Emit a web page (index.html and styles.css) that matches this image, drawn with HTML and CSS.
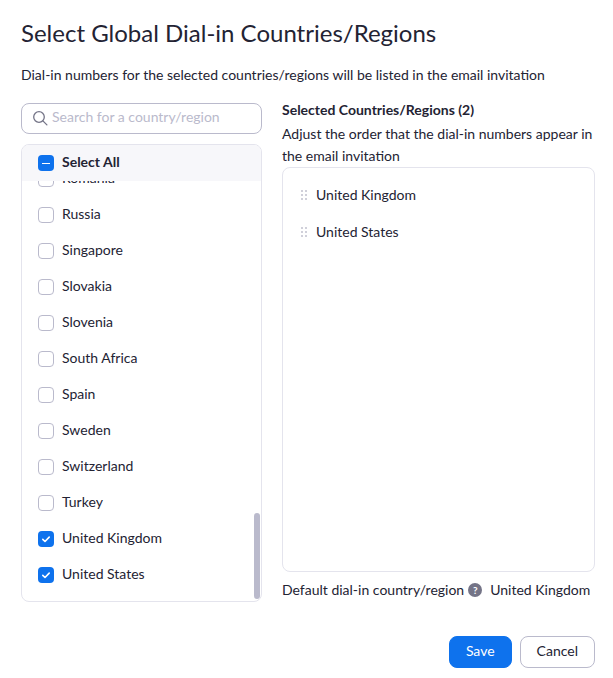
FILE: index.html
```html
<!DOCTYPE html>
<html lang="en">

<head>
    <meta charset="UTF-8">
    <meta name="viewport" content="width=device-width, initial-scale=1.0">
    <title>Select Global Dial-in Countries/Regions</title>
    <link rel="stylesheet" href="styles.css">
</head>

<body>
    <svg class="defs" width="0" height="0">
        <symbol id="tick" viewBox="0 0 16 16">
            <path d="M4.8 8.4l2.2 2.1 4.2-4.4" fill="none" stroke="#fff" stroke-width="1.6" stroke-linecap="round" stroke-linejoin="round" />
        </symbol>
        <symbol id="grip" viewBox="0 0 6 10">
            <g fill="#d0d0da">
                <rect x="0" y="0" width="2" height="2" /><rect x="4" y="0" width="2" height="2" />
                <rect x="0" y="4" width="2" height="2" /><rect x="4" y="4" width="2" height="2" />
                <rect x="0" y="8" width="2" height="2" /><rect x="4" y="8" width="2" height="2" />
            </g>
        </symbol>
    </svg>

    <div class="dialog">
        <h1>Select Global Dial-in Countries/Regions</h1>
        <p class="intro">Dial-in numbers for the selected countries/regions will be listed in the email invitation</p>

        <div class="columns">
            <!-- Left: country picker -->
            <div class="picker">
                <div class="search">
                    <svg class="search-icon" width="16" height="16" viewBox="0 0 16 16">
                        <circle cx="7" cy="7" r="5.3" fill="none" stroke="#747487" stroke-width="1.3" />
                        <path d="M10.9 10.9l4 4" fill="none" stroke="#747487" stroke-width="1.3" stroke-linecap="round" />
                    </svg>
                    <span class="placeholder">Search for a country/region</span>
                </div>

                <div class="country-box">
                    <div class="select-all">
                        <span class="check on"><span class="dash"></span></span>
                        <span>Select All</span>
                    </div>
                    <ul class="countries">
                        <li><span class="check"></span>Romania</li>
                        <li><span class="check"></span>Russia</li>
                        <li><span class="check"></span>Singapore</li>
                        <li><span class="check"></span>Slovakia</li>
                        <li><span class="check"></span>Slovenia</li>
                        <li><span class="check"></span>South Africa</li>
                        <li><span class="check"></span>Spain</li>
                        <li><span class="check"></span>Sweden</li>
                        <li><span class="check"></span>Switzerland</li>
                        <li><span class="check"></span>Turkey</li>
                        <li><span class="check on"><svg width="16" height="16"><use href="#tick" /></svg></span>United Kingdom</li>
                        <li><span class="check on"><svg width="16" height="16"><use href="#tick" /></svg></span>United States</li>
                    </ul>
                    <div class="scrollbar"></div>
                </div>
            </div>

            <!-- Right: selected list -->
            <div class="selected">
                <h3>Selected Countries/Regions (2)</h3>
                <p class="hint">Adjust the order that the dial-in numbers appear in the email invitation</p>
                <ul class="selected-box">
                    <li><svg class="grip" width="6" height="10"><use href="#grip" /></svg>United Kingdom</li>
                    <li><svg class="grip" width="6" height="10"><use href="#grip" /></svg>United States</li>
                </ul>
                <div class="default-row">
                    <span>Default dial-in country/region</span>
                    <span class="help">?</span>
                    <span class="default-value">United Kingdom</span>
                </div>
            </div>
        </div>

        <div class="actions">
            <button class="btn primary">Save</button>
            <button class="btn">Cancel</button>
        </div>
    </div>
</body>

</html>
```

FILE: styles.css
```css
* {
    box-sizing: border-box;
}

html, body {
    height: 100%;
}

body {
    margin: 0;
    font-family: Lato, "Open Sans", sans-serif;
    font-size: 14px;
    color: #232333;
    background: #fff;
    overflow: hidden;
}

.defs {
    position: absolute;
}

.dialog {
    padding: 17px 18px 0 21px;
}

h1 {
    margin: 0;
    font-size: 24px;
    font-weight: 400;
    line-height: 32px;
}

.intro {
    margin: 16px 0 0;
    line-height: 20px;
}

.columns {
    display: flex;
    gap: 20px;
    margin-top: 18px;
}

.picker {
    width: 241px;
    flex: none;
}

.search {
    height: 31px;
    display: flex;
    align-items: center;
    gap: 4px;
    padding: 0 0 2px 10px;
    border: 1px solid #babacc;
    border-radius: 8px;
}

.placeholder {
    margin-bottom: 2px;
    color: #babacc;
}

.country-box {
    position: relative;
    height: 458px;
    margin-top: 10px;
    border: 1px solid #e4e4ed;
    border-radius: 8px;
    overflow: hidden;
}

.select-all {
    position: relative;
    z-index: 1;
    height: 36px;
    display: flex;
    align-items: center;
    gap: 8px;
    padding-left: 16px;
    padding-bottom: 4px;
    font-weight: 700;
    background: #f7f7fa;
}

.countries {
    list-style: none;
    margin: -22px 0 0;
    padding: 0;
}

.countries li {
    height: 36px;
    display: flex;
    align-items: center;
    gap: 8px;
    padding-left: 16px;
}

.check {
    width: 16px;
    height: 16px;
    margin-top: 4px;
    display: flex;
    align-items: center;
    justify-content: center;
    flex: none;
    border: 1px solid #babacc;
    border-radius: 4px;
    background: #fff;
}

.check.on {
    border: none;
    background: #0e72ed;
}

.dash {
    width: 8px;
    height: 1px;
    background: #fff;
}

.scrollbar {
    position: absolute;
    top: 368px;
    left: 232px;
    width: 6px;
    height: 86px;
    border-radius: 3px;
    background: #babacc;
}

.selected {
    width: 313px;
    flex: none;
}

h3 {
    margin: -3px 0 0;
    font-size: 14px;
    font-weight: 700;
    line-height: 20px;
}

.hint {
    margin: 3px 0 0;
    line-height: 22px;
}

.selected-box {
    list-style: none;
    height: 405px;
    margin: 0;
    padding: 8px 0 0 18px;
    border: 1px solid #e4e4ed;
    border-radius: 8px;
}

.selected-box li {
    height: 37px;
    display: flex;
    align-items: center;
    gap: 9px;
}

.default-row {
    display: flex;
    align-items: center;
    margin-top: 8px;
    line-height: 20px;
}

.help {
    width: 14px;
    height: 14px;
    margin-left: 4px;
    display: flex;
    align-items: center;
    justify-content: center;
    border-radius: 50%;
    font-size: 10px;
    font-weight: 700;
    color: #fff;
    background: #747487;
}

.default-value {
    margin-left: 8px;
}

.actions {
    display: flex;
    justify-content: flex-end;
    gap: 8px;
    margin-top: 34px;
}

.btn {
    height: 32px;
    padding: 0 16px 3px;
    font-family: inherit;
    font-size: 14px;
    color: #232333;
    border: 1px solid #babacc;
    border-radius: 8px;
    background: #fff;
}

.btn.primary {
    color: #fff;
    border-color: #0e72ed;
    background: #0e72ed;
}
```
